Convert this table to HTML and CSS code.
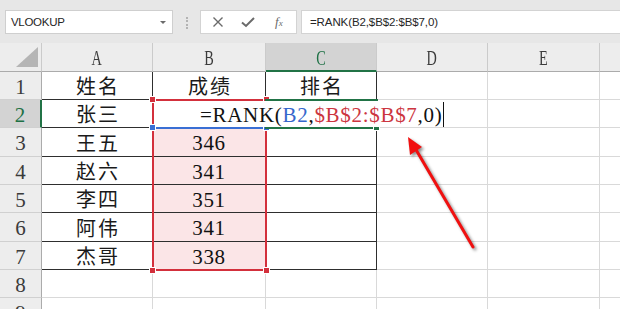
FILE: index.html
```html
<!DOCTYPE html>
<html lang="zh">
<head>
<meta charset="utf-8">
<title>RANK</title>
<link rel="stylesheet" href="styles.css">
</head>
<body>
<div class="app">
  <div class="toolbar">
    <div class="namebox"><span class="nb-text">VLOOKUP</span><span class="caret"></span></div>
    <div class="grip"></div>
    <div class="fbtns">
      <svg class="ico" width="12" height="12" viewBox="0 0 12 12"><path d="M1.5 1.5 L10.5 10.5 M10.5 1.5 L1.5 10.5" stroke="#6a6a6a" stroke-width="1.4" fill="none"/></svg>
      <svg class="ico" width="14" height="12" viewBox="0 0 14 12"><path d="M1 6.5 L5 10 L13 2" stroke="#6a6a6a" stroke-width="2" fill="none"/></svg>
      <span class="fx">f<span class="fx-x">x</span></span>
    </div>
    <div class="fbar">=RANK(B2,$B$2:$B$7,0)</div>
  </div>

  <div class="sheet">
    <div class="c hd corner"><div class="tri"></div></div>
    <div class="c hd"><span class="hl">A</span></div>
    <div class="c hd"><span class="hl">B</span></div>
    <div class="c hd hsel"><span class="hl">C</span></div>
    <div class="c hd"><span class="hl">D</span></div>
    <div class="c hd"><span class="hl">E</span></div>
    <div class="c hd"></div>

    <div class="c rh">1</div>
    <div class="c t zh">姓名</div>
    <div class="c t zh">成绩</div>
    <div class="c t zh">排名</div>
    <div class="c"></div><div class="c"></div><div class="c"></div>

    <div class="c rh rsel">2</div>
    <div class="c t zh">张三</div>
    <div class="c t"></div>
    <div class="c t"></div>
    <div class="c"></div><div class="c"></div><div class="c"></div>

    <div class="c rh">3</div>
    <div class="c t zh">王五</div>
    <div class="c t pk num">346</div>
    <div class="c t"></div>
    <div class="c"></div><div class="c"></div><div class="c"></div>

    <div class="c rh">4</div>
    <div class="c t zh">赵六</div>
    <div class="c t pk num">341</div>
    <div class="c t"></div>
    <div class="c"></div><div class="c"></div><div class="c"></div>

    <div class="c rh">5</div>
    <div class="c t zh">李四</div>
    <div class="c t pk num">351</div>
    <div class="c t"></div>
    <div class="c"></div><div class="c"></div><div class="c"></div>

    <div class="c rh">6</div>
    <div class="c t zh">阿伟</div>
    <div class="c t pk num">341</div>
    <div class="c t"></div>
    <div class="c"></div><div class="c"></div><div class="c"></div>

    <div class="c rh">7</div>
    <div class="c t zh">杰哥</div>
    <div class="c t pk num">338</div>
    <div class="c t"></div>
    <div class="c"></div><div class="c"></div><div class="c"></div>

    <div class="c rh">8</div>
    <div class="c"></div><div class="c"></div><div class="c"></div>
    <div class="c"></div><div class="c"></div><div class="c"></div>

    <div class="c rh">9</div>
    <div class="c"></div><div class="c"></div><div class="c"></div>
    <div class="c"></div><div class="c"></div><div class="c"></div>
  </div>

  <!-- overlays -->
  <div class="ref-red">
    <span class="sq sq-tl"></span><span class="sq sq-tr"></span>
    <span class="sq sq-bl"></span><span class="sq sq-br"></span>
  </div>
  <div class="ref-blue">
    <span class="sqb sqb-l"></span><span class="sqb sqb-r"></span>
  </div>
  <div class="active"><span class="handle"></span></div>
  <div class="editbox"><span class="ed"><span>=RANK(</span><span class="blue">B2</span><span>,</span><span class="red">$B$2:$B$7</span><span>,0)</span></span><span class="cursor"></span></div>

  <svg class="arrow" width="620" height="309" viewBox="0 0 620 309">
    <g class="arrow-g">
      <line x1="473" y1="247" x2="415" y2="148" stroke="#f01010" stroke-width="3" stroke-linecap="round"/>
      <polygon points="408,137 422,147 410,155" fill="#f01010"/>
    </g>
  </svg>
</div>
</body>
</html>
```

FILE: styles.css
```css
html, body {
  margin: 0;
  padding: 0;
  overflow: hidden;
  background: #ffffff;
}

.app {
  position: relative;
  width: 620px;
  height: 309px;
  overflow: hidden;
  font-family: "Liberation Serif", "Noto Sans CJK SC", serif;
}

/* ---------- toolbar ---------- */
.toolbar {
  height: 43px;
  box-sizing: border-box;
  background: #e7e7e7;
  display: flex;
  align-items: flex-start;
  padding: 10px 0 0 5px;
}

.namebox {
  width: 168px;
  height: 24px;
  box-sizing: border-box;
  background: #fff;
  border: 1px solid #cfcfcf;
  display: flex;
  align-items: center;
  justify-content: space-between;
  padding: 0 6px 0 5px;
}

.nb-text {
  font-family: "Liberation Sans", Arial, sans-serif;
  font-size: 11.5px;
  color: #262626;
  letter-spacing: -0.3px;
}

.caret {
  width: 0;
  height: 0;
  border-left: 3px solid transparent;
  border-right: 3px solid transparent;
  border-top: 3px solid #6b6b6b;
}

.grip {
  width: 0;
  height: 12px;
  margin: 7px 0 0 13px;
  border-left: 2px dotted #b3b3b3;
}

.fbtns {
  margin-left: 12px;
  width: 97px;
  height: 24px;
  box-sizing: border-box;
  background: #fff;
  border: 1px solid #d3d3d3;
  display: flex;
  align-items: center;
  padding-left: 11px;
  gap: 17px;
}

.fx {
  font-family: "Liberation Serif", serif;
  font-style: italic;
  font-size: 13px;
  color: #6a6a6a;
  margin-left: 3px;
}

.fx-x {
  font-size: 9px;
}

.fbar {
  margin-left: 4px;
  flex: 1;
  height: 24px;
  box-sizing: border-box;
  background: #fff;
  border: 1px solid #d3d3d3;
  border-right: none;
  display: flex;
  align-items: center;
  padding-left: 8px;
  font-family: "Liberation Sans", Arial, sans-serif;
  font-size: 11.5px;
  color: #262626;
  letter-spacing: -0.1px;
}

/* ---------- sheet ---------- */
.sheet {
  display: grid;
  grid-template-columns: 42px 111px 113px 111px 111px 112px 40px;
  grid-template-rows: 29px 28px 28px 29px 28px 28px 29px 28px 28px 28px;
  width: 620px;
}

.c {
  box-sizing: border-box;
  border-right: 1px solid #d9d9d9;
  border-bottom: 1px solid #d9d9d9;
  display: flex;
  align-items: center;
  justify-content: center;
  font-size: 21px;
  color: #111;
  white-space: nowrap;
  overflow: hidden;
  background: #fff;
}

.hd {
  background: #ededed;
  border-right-color: #cbcbcb;
  border-bottom-color: #ababab;
  color: #3b3b3b;
  font-size: 21px;
  padding-top: 3px;
}

.hl {
  display: inline-block;
  transform: scaleX(0.68);
}

.hsel {
  background: #d3d3d3;
  color: #1e7145;
  border-bottom: 2px solid #217346;
}

.corner {
  justify-content: flex-end;
  align-items: flex-end;
  padding: 0 3px 4px 0;
}

.tri {
  width: 22px;
  height: 20px;
  background: #b5b5b5;
  clip-path: polygon(100% 0, 100% 100%, 0 100%);
}

.rh {
  background: #ededed;
  border-right-color: #ababab;
  border-bottom-color: #d0d0d0;
  color: #3b3b3b;
  padding-top: 3px;
}

.rsel {
  background: #d3d3d3;
  color: #1e7145;
  border-right: 2px solid #217346;
}

.t {
  border-right-color: #2e2e2e;
  border-bottom-color: #2e2e2e;
}

.zh {
  font-family: "Noto Sans CJK SC", sans-serif;
  font-size: 20px;
  letter-spacing: 2px;
  padding-left: 2px;
  color: #1a1a1a;
}

.num {
  letter-spacing: 0.6px;
  padding-top: 3px;
}

.pk {
  background: #fbe5e7;
}

/* ---------- overlays ---------- */
.ref-red {
  position: absolute;
  left: 152px;
  top: 99px;
  width: 115px;
  height: 172px;
  box-sizing: border-box;
  border: 2px solid #d3303c;
}

.sq {
  position: absolute;
  width: 5px;
  height: 5px;
  background: #d3303c;
  border: 1px solid #fff;
}

.sq-tl { left: -5px; top: -5px; }
.sq-tr { right: -5px; top: -5px; }
.sq-bl { left: -5px; bottom: -5px; }
.sq-br { right: -5px; bottom: -5px; }

.ref-blue {
  position: absolute;
  left: 152px;
  top: 127px;
  width: 115px;
  height: 2px;
  background: #3a6fd4;
}

.sqb {
  position: absolute;
  top: -3px;
  width: 5px;
  height: 5px;
  background: #3a6fd4;
  border: 1px solid #fff;
}

.sqb-l { left: -3px; }
.sqb-r { right: -3px; }

.active {
  position: absolute;
  left: 265px;
  top: 99px;
  width: 113px;
  height: 30px;
  box-sizing: border-box;
  border: 2px solid #217346;
}

.handle {
  position: absolute;
  right: -4px;
  bottom: -4px;
  width: 5px;
  height: 5px;
  background: #217346;
  border: 1px solid #fff;
}

.editbox {
  position: absolute;
  left: 195px;
  top: 101px;
  width: 250px;
  height: 26px;
  background: #fff;
  display: flex;
  align-items: center;
  padding-left: 5px;
  box-sizing: border-box;
  font-family: "Liberation Serif", serif;
  font-size: 21px;
  color: #111;
  white-space: nowrap;
}

.ed {
  letter-spacing: 0.7px;
  padding-top: 2px;
}

.blue { color: #3567cc; }
.red { color: #cc3540; }

.cursor {
  width: 1px;
  height: 25px;
  background: #111;
  margin-left: 1px;
}

.arrow {
  position: absolute;
  left: 0;
  top: 0;
  pointer-events: none;
}

.arrow-g {
  filter: drop-shadow(2px 2px 1.5px rgba(0, 0, 0, 0.45));
}
```
